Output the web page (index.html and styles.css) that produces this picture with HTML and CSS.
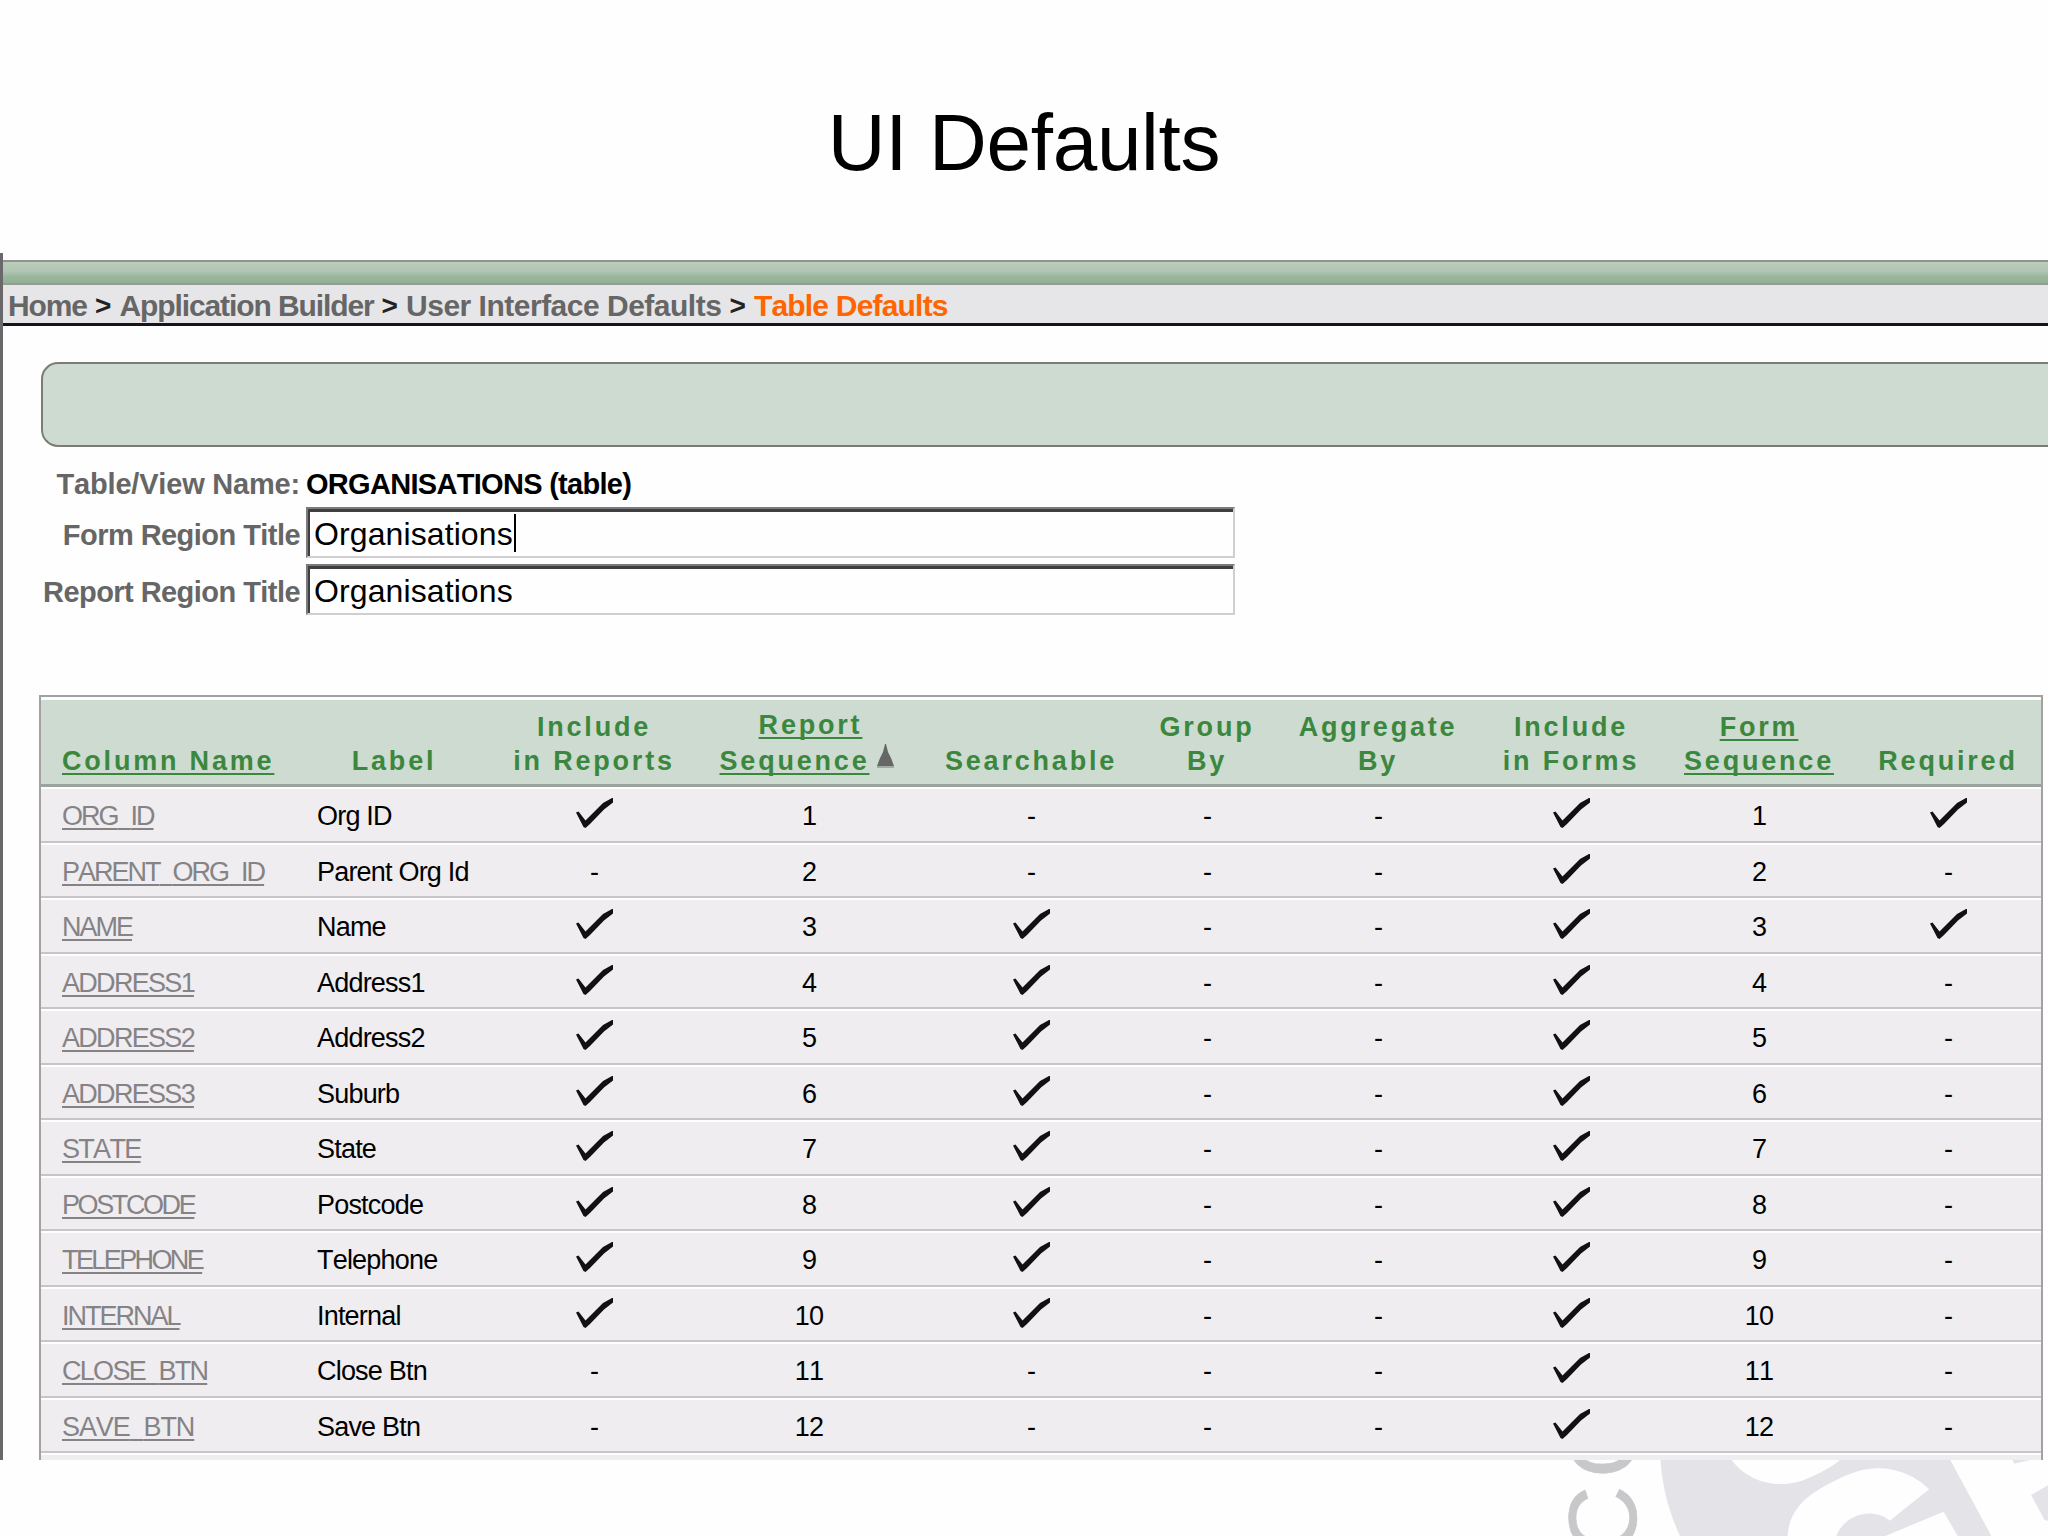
FILE: index.html
```html
<!DOCTYPE html>
<html lang="en">
<head>
<meta charset="utf-8">
<title>UI Defaults</title>
<link rel="stylesheet" href="styles.css">
</head>
<body>
<h1 class="title">UI Defaults</h1>
<main class="app">
  <div class="topbar"></div>
  <nav class="crumbs"><a>Home</a><i>&gt;</i><a>Application Builder</a><i>&gt;</i><a class="wide">User Interface Defaults</a><i>&gt;</i><a class="wide current">Table Defaults</a></nav>
  <div class="panel"></div>
  <div class="form">
    <label class="view">Table/View Name:</label><strong>ORGANISATIONS (table)</strong>
    <label class="tall">Form Region Title</label><div class="field"><span class="caret">Organisations</span></div>
    <label class="tall">Report Region Title</label><div class="field"><span>Organisations</span></div>
  </div>
  <div class="table" id="table">
    <div class="row head">
      <div class="name"><u>Column Name</u></div>
      <div>Label</div>
      <div>Include<br>in Reports</div>
      <div class="sorted"><u>Report</u><span><u>Sequence</u><svg class="arrow" viewBox="0 0 17 24"><path d="M0 22 3 14 6 8 8 0h1l2 8 3 6 3 8z" fill="#666"/><path d="M0 22h17v2H0z" fill="#a3aaa5"/></svg></span></div>
      <div>Searchable</div>
      <div>Group<br>By</div>
      <div>Aggregate<br>By</div>
      <div>Include<br>in Forms</div>
      <div><u>Form</u><br><u>Sequence</u></div>
      <div>Required</div>
    </div>
  </div>
</main>
<svg class="watermark" viewBox="0 0 528 76">
  <g transform="scale(.3367 .3333)">
    <path fill="#e4e3e7" d="M417 0H1278L1400 228H475C440 150 424 85 417 0Z"/>
    <path fill="#fefefe" d="M628 0C690 80 790 90 870 48 900 35 930 18 950 0ZM795 228C800 130 880 90 950 55 1010 25 1060 20 1100 28 1150 38 1185 58 1215 88L1098 182C1060 150 1000 155 965 190 952 203 943 215 940 228ZM1085 228 1258 155 1300 228Z"/>
    <path fill="#e4e3e7" d="M1463 0H1515L1468 11ZM1568 76 1518 105 1558 180 1568 182Z"/>
  </g>
  <text class="mark" transform="translate(115.500 95) rotate(-90)">CO</text>
</svg>
<script src="rows.js"></script>
</body>
</html>
```
FILE: rows.js
```js
// name, label, tracking class, flags: reports, searchable, forms, required
const rows = [
  ["ORG_ID", "Org ID", "m", 1, 0, 1, 1],
  ["PARENT_ORG_ID", "Parent Org Id", "m", 0, 0, 1, 0],
  ["NAME", "Name", "m", 1, 1, 1, 1],
  ["ADDRESS1", "Address1", "l", 1, 1, 1, 0],
  ["ADDRESS2", "Address2", "l", 1, 1, 1, 0],
  ["ADDRESS3", "Suburb", "l", 1, 1, 1, 0],
  ["STATE", "State", "l", 1, 1, 1, 0],
  ["POSTCODE", "Postcode", "s", 1, 1, 1, 0],
  ["TELEPHONE", "Telephone", "xs", 1, 1, 1, 0],
  ["INTERNAL", "Internal", "m", 1, 1, 1, 0],
  ["CLOSE_BTN", "Close Btn", "l", 0, 0, 1, 0],
  ["SAVE_BTN", "Save Btn", "xl", 0, 0, 1, 0]
];
const check = '<svg class="check" viewBox="0 0 37 30"><path d="M0 14.500 2.500 13.500 9.500 22.500 27 5 36 0H37V4.500L28 11.500 14 26 9.500 30 7.500 29Z"/></svg>';
const flag = v => `<div>${v ? check : "-"}</div>`;
const body = rows.map(([name, label, track, rep, search, forms, req], i) =>
  `<div class="row"><div class="name"><a class="${track}">${name.replace(/_/g, '<b>_</b>')}</a></div><div class="label">${label}</div>` +
  `${flag(rep)}<div>${i + 1}</div>${flag(search)}${flag(0)}${flag(0)}${flag(forms)}<div>${i + 1}</div>${flag(req)}</div>`
).join("");
document.getElementById("table").insertAdjacentHTML("beforeend", body + '<div class="row"></div>');
```
FILE: styles.css
```css
* { box-sizing: border-box; }
body { margin: 0; width: 2048px; height: 1536px; overflow: hidden; background: #fefefe; color: #000; font-family: "Liberation Sans", Arial, sans-serif; font-kerning: none; font-variant-ligatures: none; }
.title { margin: 0; height: 253px; padding-top: 98px; font-size: 80px; line-height: 90px; font-weight: 400; letter-spacing: -.3px; text-align: center; }
.app { height: 1207px; border-left: 3px solid #6a686a; padding-top: 7px; overflow: hidden; }
.topbar { height: 25px; border-top: 2px solid #8d938e; border-bottom: 2px solid #969b94; background: linear-gradient(#bccdbb, #afc6b1 45%, #9ab69d 70%, #91b197); }
.crumbs { height: 41px; padding: 2px 0 0 5px; display: flex; gap: 8px; background: #e6e6e8; border-bottom: 3px solid #171519; font-size: 30px; line-height: 37px; font-weight: 700; letter-spacing: -1.1px; color: #666; white-space: nowrap; }
.crumbs i { width: 16.500px; font-style: normal; font-size: 28px; color: #222; }
.crumbs .wide { letter-spacing: -.5px; }
.crumbs .current { color: #ff6500; letter-spacing: -.8px; }
.panel { height: 85px; margin: 36px 0 0 38px; border: 2px solid #7b7c77; border-right: 0; border-radius: 17px 0 0 17px; background: #cddbd0; }
.form { margin: 14px 0 0 38px; display: grid; grid-template: 46px 50px 50px / 259px 929px; column-gap: 6px; font-size: 29px; letter-spacing: -.55px; font-weight: 700; height: 234px; }
.form label { color: #666; text-align: right; line-height: 46px; white-space: nowrap; }
.form .view { letter-spacing: -.2px; }
.form .tall { line-height: 56px; }
.form strong { line-height: 46px; letter-spacing: -.7px; }
.form > :nth-child(n+5) { margin-top: 7px; height: 51px; }
.field { height: 51px; padding: 1px 0 0 3px; border: 2px solid; border-color: #7c7b7c #d0ced0 #d0ced0 #7c7b7c; box-shadow: inset 2px 3px #3f3e40; font-size: 32px; line-height: 50px; letter-spacing: .1px; font-weight: 400; }
.field span { display: inline-block; height: 38px; line-height: 38px; margin: 4px 0 0 3px; vertical-align: top; padding-top: 1px; }
.form .caret { border-right: 2px solid #000; padding-right: 1px; }
.table { width: 2004px; margin-left: 36px; height: 765px; overflow: hidden; border: 2px solid #a3a1a2; border-bottom: 0; background: #efedf0; font-size: 27px; letter-spacing: -.8px; }
.row { height: 55.5px; display: grid; grid-template-columns: 257px 192px 208px 222px 222px 130px 212px 174px 202px 176px; border-top: 2px solid #fefefe; border-bottom: 2px solid #c7c5c8; line-height: 54px; text-align: center; white-space: nowrap; }
.head { height: 90px; border-top-width: 3px; border-bottom: 3px solid #9ba39e; background: #cddbd0; color: #3c873e; font-size: 27px; font-weight: 700; line-height: 34px; letter-spacing: 2.8px; align-items: end; padding-bottom: 6.5px; }
.row > .name { padding-left: 21px; text-align: left; }
.label { padding-left: 19px; text-align: left; }
u, .name a { text-decoration: underline; text-decoration-thickness: 2px; text-underline-offset: 3px; text-decoration-skip-ink: none; }
.name a { color: #858385; letter-spacing: -2px; }
.name b { font-weight: 400; color: transparent; }
.name .xs { letter-spacing: -2.6px; }
.name .s { letter-spacing: -2.4px; }
.name .l { letter-spacing: -1.7px; }
.name .xl { letter-spacing: -1.1px; }
.sorted { display: flex; flex-direction: column; align-items: center; line-height: 34px; }
.sorted > u { margin-bottom: 2px; padding-left: 3px; }
.sorted span { display: flex; margin-right: 4px; }
.arrow { width: 17px; height: 24px; margin: 0 0 0 8px; }
.check { width: 37px; height: 30px; vertical-align: top; margin-top: 9px; fill: #111; }
.watermark { display: block; width: 528px; height: 76px; margin-left: 1520px; }
.mark { font-size: 96px; letter-spacing: 8px; fill: #c8c7ca; stroke: #c8c7ca; stroke-width: .5px; }
```
